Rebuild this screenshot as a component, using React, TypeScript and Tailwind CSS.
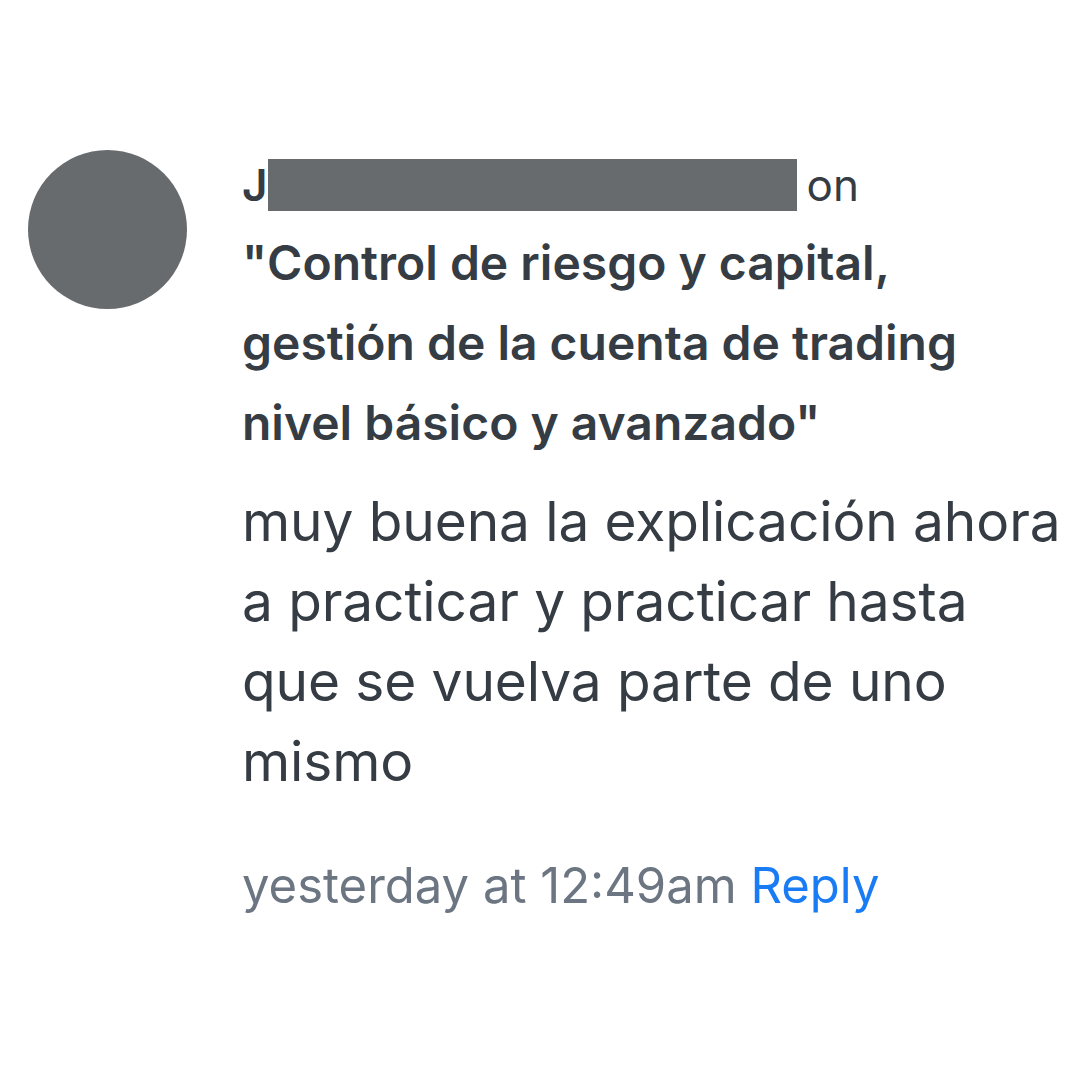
export default function App() {
  return (
    <div className="w-[1080px] h-[1080px] bg-white font-['Inter','Liberation_Sans',sans-serif] text-[#353c43] overflow-hidden">
      <div className="flex items-start pt-[150px] pl-[28px] gap-[55px]">
        <div className="w-[159px] h-[159px] shrink-0 rounded-full bg-[#686b6e]"></div>
        <div className="flex flex-col pt-[5px]">
          <div className="flex items-center text-[44px] leading-[60px]">
            <span className="font-semibold">J</span>
            <span className="w-[529px] h-[52px] bg-[#686b6e]"></span>
            <span className="ml-[10px]">on</span>
          </div>
          <div className="text-[48px] font-semibold leading-[80px] mt-[8px]">
            "Control de riesgo y capital,
            <br />
            gestión de la cuenta de trading
            <br />
            nivel básico y avanzado"
          </div>
          <div className="text-[55px] leading-[80px] mt-[18px] tracking-[-0.1px]">
            muy buena la explicación ahora
            <br />
            a practicar y practicar hasta
            <br />
            que se vuelva parte de uno
            <br />
            mismo
          </div>
          <div className="text-[49px] leading-[60px] mt-[55px] whitespace-nowrap">
            <span className="text-[#6c7683]">yesterday at 12:49am</span>{" "}
            <span className="text-[#1a7cf5]">Reply</span>
          </div>
        </div>
      </div>
    </div>
  );
}
